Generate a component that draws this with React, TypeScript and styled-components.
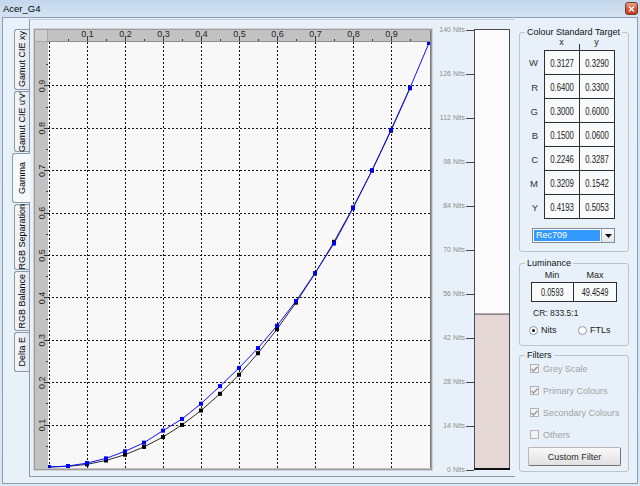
import React from "react";
import styled, { createGlobalStyle } from "styled-components";

const FONT = `"Liberation Sans", Arial, Helvetica, sans-serif`;

const GlobalStyle = createGlobalStyle`
  html, body { margin: 0; padding: 0; }
  body { background: #d9e6f3; font-family: ${FONT}; color: #1a1a1a; }
  #root { width: 640px; height: 486px; overflow: hidden; }
`;

// ---- window chrome ----

const Window = styled.div`
  width: 640px;
  height: 486px;
  display: flex;
  flex-direction: column;
  background: linear-gradient(to bottom, #c3d7ec 0px, #d5e3f2 17px, #d9e6f3 100%);
`;

const TitleBar = styled.div`
  height: 17px;
  display: flex;
  align-items: center;
  justify-content: space-between;
  padding: 0 2px 0 3px;
  box-sizing: border-box;
`;

const Title = styled.span`
  font-size: 9.5px;
  color: #000;
`;

const CloseButton = styled.div`
  width: 13px;
  height: 13px;
  box-sizing: border-box;
  border: 1px solid #7b3326;
  border-radius: 3px;
  background: linear-gradient(to bottom, #eaa58f, #d65a3d 50%, #c23b1f);
  display: flex;
  align-items: center;
  justify-content: center;
`;

const Client = styled.div`
  flex: 1;
  margin: 0 2px 2px 2px;
  border: 1px solid #8d9db0;
  background: #e8f1f9;
  display: flex;
`;

// ---- tabs ----

const TabArea = styled.div`
  display: flex;
  padding: 1px 0 0 9px;
`;

const TabStrip = styled.div`
  width: 17px;
  display: flex;
  flex-direction: column;
  align-items: flex-end;
  padding-top: 10px;
  box-sizing: border-box;
`;

const Tab = styled.div<{ $active?: boolean; $len: number }>`
  height: ${({ $len }) => $len}px;
  width: ${({ $active }) => ($active ? 18 : 15)}px;
  margin-right: ${({ $active }) => ($active ? -1 : 0)}px;
  margin-bottom: 1px;
  box-sizing: border-box;
  border: 1px solid #8a99a8;
  border-right: none;
  border-radius: 3px 0 0 3px;
  background: ${({ $active }) =>
    $active ? "#f6f9fc" : "linear-gradient(to right, #f4f7fa, #e1e8ef)"};
  display: flex;
  align-items: center;
  justify-content: center;
  padding-left: 1px;
  position: relative;
  z-index: ${({ $active }) => ($active ? 1 : 0)};
`;

const TabLabel = styled.span`
  display: inline-block;
  writing-mode: vertical-rl;
  transform: rotate(180deg);
  font-size: 9px;
  line-height: 1;
  white-space: nowrap;
  color: #000;
`;

const Panel = styled.div`
  width: 486px;
  height: 458px;
  box-sizing: border-box;
  border-left: 1px solid #8a99a8;
  border-bottom: 1px solid #8a99a8;
  border-top: 1px solid #c3cfda;
  background: #e8f1f9;
  display: flex;
  align-items: flex-start;
  padding: 4px 0 0 3px;
`;

const ChartSvg = styled.svg`
  display: block;
  flex: none;
`;

// ---- right column ----

const RightPanel = styled.div`
  display: flex;
  flex-direction: column;
  padding: 9px 0 0 4px;
`;

const Group = styled.fieldset<{ $h: number; $mt?: number }>`
  margin: ${({ $mt }) => $mt ?? 0}px 0 0 0;
  padding: 0;
  width: 110px;
  min-width: 0;
  height: ${({ $h }) => $h}px;
  box-sizing: border-box;
  border: 1px solid #b9c4ce;
  border-radius: 3px;
`;

const Legend = styled.legend`
  margin-left: 5px;
  padding: 0 2px;
  font-size: 9px;
  line-height: 10px;
  color: #111;
`;

const HeadRow = styled.div`
  display: flex;
  margin-left: 24px;
  height: 13px;
  font-size: 9px;
  line-height: 11px;
  color: #222;
`;

const HeadCell = styled.div<{ $split?: boolean }>`
  width: 35px;
  text-align: center;
  position: relative;
  &::before {
    content: "";
    display: ${({ $split }) => ($split ? "block" : "none")};
    position: absolute;
    left: 0;
    bottom: 0;
    width: 1px;
    height: 6px;
    background: #2e2e2e;
  }
`;

const Row = styled.div`
  display: flex;
`;

const RowLabel = styled.div`
  width: 24px;
  box-sizing: border-box;
  padding-right: 6px;
  font-size: 9.5px;
  color: #333;
  display: flex;
  align-items: center;
  justify-content: flex-end;
`;

const Cell = styled.div<{ $first?: boolean; $last?: boolean }>`
  width: ${({ $last }) => ($last ? 36 : 35)}px;
  height: ${({ $first }) => ($first ? 25 : 24)}px;
  box-sizing: border-box;
  border-left: 1px solid #2e2e2e;
  border-bottom: 1px solid #2e2e2e;
  border-top: ${({ $first }) => ($first ? "1px solid #2e2e2e" : "none")};
  border-right: ${({ $last }) => ($last ? "1px solid #2e2e2e" : "none")};
  background: #f9fafb;
  display: flex;
  align-items: center;
  justify-content: center;
  color: #222;
`;

// the dialog's numeric font is a tall condensed face
const Num = styled.span<{ $size?: number }>`
  display: inline-block;
  font-size: ${({ $size }) => $size ?? 10.5}px;
  transform: scaleX(0.74);
  white-space: nowrap;
`;

const Select = styled.div`
  margin: 9px 0 0 12px;
  width: 83px;
  height: 15px;
  box-sizing: border-box;
  border: 1px solid #7f8a95;
  background: #fff;
  display: flex;
  padding: 1px 0 1px 1px;
`;

const SelectValue = styled.div`
  flex: 1;
  background: #3399ff;
  color: #fff;
  font-size: 9px;
  line-height: 11px;
  padding-left: 2px;
`;

const SelectArrow = styled.div`
  width: 13px;
  margin: -1px 0 -1px 1px;
  box-sizing: border-box;
  border-left: 1px solid #a9b2bb;
  background: linear-gradient(to bottom, #fbfbfb, #e3e6e9);
  display: flex;
  align-items: center;
  justify-content: center;
`;

const LumHead = styled.div`
  margin: 2px 0 0 11px;
  width: 86px;
  display: flex;
  font-size: 9px;
  line-height: 10px;
  color: #222;
  & > span:first-child { width: 42px; text-align: center; }
  & > span:last-child { flex: 1; text-align: center; }
`;

const LumBox = styled.div`
  margin: 2px 0 0 11px;
  width: 86px;
  height: 20px;
  box-sizing: border-box;
  border: 1px solid #2e2e2e;
  background: #f9fafb;
  display: flex;
`;

const LumCell = styled.div<{ $divider?: boolean }>`
  width: ${({ $divider }) => ($divider ? "auto" : "41px")};
  flex: ${({ $divider }) => ($divider ? 1 : "none")};
  border-left: ${({ $divider }) => ($divider ? "1px solid #2e2e2e" : "none")};
  display: flex;
  align-items: center;
  justify-content: center;
  color: #222;
`;

const Ratio = styled.div`
  margin: 6px 0 0 13px;
  font-size: 8.5px;
  line-height: 10px;
  color: #222;
`;

const RadioRow = styled.div`
  margin: 7px 0 0 9px;
  display: flex;
  height: 10px;
`;

const RadioOption = styled.label`
  width: 49px;
  display: flex;
  align-items: center;
  gap: 3px;
  font-size: 9px;
  color: #222;
`;

const RadioDot = styled.span<{ $checked?: boolean }>`
  width: 9px;
  height: 9px;
  box-sizing: border-box;
  border-radius: 50%;
  border: 1px solid #8c97a2;
  background: #fff;
  display: flex;
  align-items: center;
  justify-content: center;
  &::after {
    content: "";
    width: 3px;
    height: 3px;
    border-radius: 50%;
    background: ${({ $checked }) => ($checked ? "#111" : "transparent")};
  }
`;

const FilterList = styled.div`
  display: flex;
  flex-direction: column;
  gap: 11px;
  padding: 3px 0 0 10px;
`;

const CheckRow = styled.label`
  height: 11px;
  display: flex;
  align-items: center;
  gap: 4px;
  font-size: 9px;
  color: #a3a3a3;
`;

const CheckBox = styled.span`
  width: 9px;
  height: 9px;
  box-sizing: border-box;
  border: 1px solid #b2b2b2;
  background: #f3f3f3;
  display: flex;
  align-items: center;
  justify-content: center;
`;

const FilterButton = styled.button`
  margin: 7px 0 0 8px;
  width: 93px;
  height: 19px;
  padding: 0;
  box-sizing: border-box;
  border: 1px solid;
  border-color: #b8b8b8 #6f6f6f #6f6f6f #b8b8b8;
  border-radius: 2px;
  background: linear-gradient(to bottom, #f8f8f8, #e1e1e1);
  font-family: ${FONT};
  font-size: 9px;
  color: #2a2a2a;
`;

// ---- data ----

const TABS = [
  { label: "Gamut CIE xy", len: 61 },
  { label: "Gamut CIE u'v'", len: 61 },
  { label: "Gamma", len: 50, active: true },
  { label: "RGB Separation", len: 66 },
  { label: "RGB Balance", len: 60 },
  { label: "Delta E", len: 40 },
];

const TARGETS = [
  { name: "W", x: "0.3127", y: "0.3290" },
  { name: "R", x: "0.6400", y: "0.3300" },
  { name: "G", x: "0.3000", y: "0.6000" },
  { name: "B", x: "0.1500", y: "0.0600" },
  { name: "C", x: "0.2246", y: "0.3287" },
  { name: "M", x: "0.3209", y: "0.1542" },
  { name: "Y", x: "0.4193", y: "0.5053" },
];

const FILTERS = [
  { label: "Grey Scale", checked: true },
  { label: "Primary Colours", checked: true },
  { label: "Secondary Colours", checked: true },
  { label: "Others", checked: false },
];

// measured deviation from the 2.2 target, per 5% step
const LIFT = [
  0, 0.001, 0.003, 0.005, 0.008, 0.01, 0.015, 0.014, 0.016, 0.018, 0.016,
  0.012, 0.008, 0.004, 0.001, -0.004, -0.002, 0, 0.002, 0.001, 0,
];

const STEPS = Array.from({ length: 21 }, (_, i) => i * 0.05);
const TARGET = STEPS.slice(0, 20).map((v) => ({ x: v, y: Math.pow(v, 2.2) }));
const MEASURED = STEPS.map((v, i) => ({ x: v, y: Math.pow(v, 2.2) + LIFT[i] }));

// chart geometry (svg coords, before the 4px top inset)
const X0 = 16;
const XS = 380;
const Y0 = 439;
const YS = 424;
const INSET = 4;
const px = (v: number) => X0 + v * XS;
const py = (v: number) => Y0 - v * YS;
const crisp = (n: number) => Math.round(n) + 0.5;

const GammaChart = () => {
  const tenths = Array.from({ length: 9 }, (_, i) => (i + 1) / 10);
  const halves = Array.from({ length: 10 }, (_, i) => i / 10 + 0.05);
  const line = (pts: { x: number; y: number }[]) =>
    pts.map((p) => `${px(p.x).toFixed(1)},${py(p.y).toFixed(1)}`).join(" ");

  return (
    <ChartSvg width={400} height={451} viewBox="0 0 400 451">
      <defs>
        <clipPath id="plotClip">
          <rect x={15} y={14} width={382} height={426} />
        </clipPath>
      </defs>
      <g transform={`translate(0 ${INSET})`}>
        <rect x={1} y={1} width={398} height={441} fill="#c2c2c2" />
        <rect x={15} y={14} width={382} height={426} fill="#f8f8f8" />
        {/* corner box */}
        <rect x={1.5} y={1.5} width={13} height={12} fill="#cfcfcf" stroke="#a6a6a6" />
        <line x1={15} y1={1.5} x2={397} y2={1.5} stroke="#e6e6e6" />
        <line x1={1.5} y1={14} x2={1.5} y2={440} stroke="#e0e0e0" />
        <line x1={15} y1={13.5} x2={397} y2={13.5} stroke="#8e8e8e" />
        <line x1={397.5} y1={1} x2={397.5} y2={440} stroke="#7a7a7a" />

        {/* grid */}
        <g stroke="#111" strokeDasharray="2 2" shapeRendering="crispEdges">
          {[0, ...tenths].map((v) => (
            <line key={`gx${v}`} x1={crisp(px(v))} y1={14} x2={crisp(px(v))} y2={440} />
          ))}
          {tenths.map((v) => (
            <line key={`gy${v}`} x1={15} y1={crisp(py(v))} x2={397} y2={crisp(py(v))} />
          ))}
        </g>

        {/* ticks */}
        <g stroke="#3a3a3a" shapeRendering="crispEdges">
          {tenths.map((v) => (
            <line key={`tx${v}`} x1={crisp(px(v))} y1={8} x2={crisp(px(v))} y2={13} />
          ))}
          {halves.map((v) => (
            <line key={`hx${v}`} x1={crisp(px(v))} y1={11} x2={crisp(px(v))} y2={13} />
          ))}
          {tenths.map((v) => (
            <line key={`ty${v}`} x1={11} y1={crisp(py(v))} x2={15} y2={crisp(py(v))} />
          ))}
          {halves.map((v) => (
            <line key={`hy${v}`} x1={13} y1={crisp(py(v))} x2={15} y2={crisp(py(v))} />
          ))}
        </g>

        {/* axis labels */}
        <g fontFamily={FONT} fontSize={9} fill="#262626" textAnchor="middle">
          {tenths.map((v) => (
            <text key={`lx${v}`} x={px(v) + 0.5} y={9}>
              {v.toFixed(1)}
            </text>
          ))}
          {tenths.map((v) => (
            <text key={`ly${v}`} transform={`translate(12 ${py(v) + 0.5}) rotate(-90)`}>
              {v.toFixed(1)}
            </text>
          ))}
        </g>

        {/* curves */}
        <g clipPath="url(#plotClip)">
          <polyline points={line(TARGET)} fill="none" stroke="#2a2a2a" strokeWidth={1} />
          {TARGET.map((p) => (
            <rect key={`t${p.x}`} x={px(p.x) - 2} y={py(p.y) - 2} width={4} height={4} fill="#000" />
          ))}
          <polyline points={line(MEASURED)} fill="none" stroke="#1010ff" strokeWidth={1} />
          {MEASURED.map((p) => (
            <rect key={`m${p.x}`} x={px(p.x) - 2} y={py(p.y) - 2} width={4} height={4} fill="#0000f0" />
          ))}
        </g>

        {/* frame */}
        <rect x={0.5} y={0.5} width={399} height={442} fill="none" stroke="#d2d2d2" />
        <rect x={1.5} y={1.5} width={397} height={440} fill="none" stroke="#9c9c9c" />
      </g>
    </ChartSvg>
  );
};

const NitsGauge = ({ value, max }: { value: number; max: number }) => {
  const top = 1.5 + INSET;
  const bottom = 441.5 + INSET;
  const h = bottom - top;
  const fillTop = bottom - (value / max) * h;
  const marks = Array.from({ length: 11 }, (_, i) => i);

  return (
    <ChartSvg width={80} height={451} viewBox="0 0 80 451">
      <g fontFamily={FONT} fontSize={7} fill="#8e8e8e" textAnchor="end">
        {marks.map((i) => (
          <text key={i} x={32} y={top + (i * h) / 10 + 2.5}>
            {max - i * 14} Nits
          </text>
        ))}
      </g>
      <g stroke="#444" shapeRendering="crispEdges">
        {marks.map((i) => (
          <line key={i} x1={33} y1={crisp(top + (i * h) / 10)} x2={41} y2={crisp(top + (i * h) / 10)} />
        ))}
      </g>
      <rect x={41.5} y={top} width={35} height={h} fill="#fcfcfc" stroke="#4a4a4a" />
      <rect x={42} y={fillTop} width={34} height={bottom - fillTop} fill="#e6d7d7" />
      <line x1={41.5} y1={fillTop} x2={76.5} y2={fillTop} stroke="#4a4a4a" />
      <line x1={41} y1={bottom - 0.5} x2={77} y2={bottom - 0.5} stroke="#111" strokeWidth={2} />
    </ChartSvg>
  );
};

export default function App() {
  return (
    <>
      <GlobalStyle />
      <Window>
        <TitleBar>
          <Title>Acer_G4</Title>
          <CloseButton>
            <svg width="7" height="6" viewBox="0 0 7 6">
              <path d="M1 0.5 L6 5.5 M6 0.5 L1 5.5" stroke="#fff" strokeWidth="1.4" />
            </svg>
          </CloseButton>
        </TitleBar>
        <Client>
          <TabArea>
            <TabStrip>
              {TABS.map((t) => (
                <Tab key={t.label} $len={t.len} $active={t.active}>
                  <TabLabel>{t.label}</TabLabel>
                </Tab>
              ))}
            </TabStrip>
            <Panel>
              <GammaChart />
              <NitsGauge value={49.4549} max={140} />
            </Panel>
          </TabArea>

          <RightPanel>
            <Group $h={225}>
              <Legend>Colour Standard Target</Legend>
              <HeadRow>
                <HeadCell>x</HeadCell>
                <HeadCell $split>y</HeadCell>
              </HeadRow>
              {TARGETS.map((r, i) => (
                <Row key={r.name}>
                  <RowLabel>{r.name}</RowLabel>
                  <Cell $first={i === 0}>
                    <Num>{r.x}</Num>
                  </Cell>
                  <Cell $first={i === 0} $last>
                    <Num>{r.y}</Num>
                  </Cell>
                </Row>
              ))}
              <Select>
                <SelectValue>Rec709</SelectValue>
                <SelectArrow>
                  <svg width="7" height="4" viewBox="0 0 7 4">
                    <path d="M0 0 H7 L3.5 4 Z" fill="#111" />
                  </svg>
                </SelectArrow>
              </Select>
            </Group>

            <Group $h={88} $mt={6}>
              <Legend>Luminance</Legend>
              <LumHead>
                <span>Min</span>
                <span>Max</span>
              </LumHead>
              <LumBox>
                <LumCell>
                  <Num $size={10}>0.0593</Num>
                </LumCell>
                <LumCell $divider>
                  <Num $size={10}>49.4549</Num>
                </LumCell>
              </LumBox>
              <Ratio>CR: 833.5:1</Ratio>
              <RadioRow>
                <RadioOption>
                  <RadioDot $checked />
                  Nits
                </RadioOption>
                <RadioOption>
                  <RadioDot />
                  FTLs
                </RadioOption>
              </RadioRow>
            </Group>

            <Group $h={122} $mt={4}>
              <Legend>Filters</Legend>
              <FilterList>
                {FILTERS.map((f) => (
                  <CheckRow key={f.label}>
                    <CheckBox>
                      {f.checked && (
                        <svg width="7" height="6" viewBox="0 0 7 6">
                          <path d="M0.5 3 L2.5 5 L6.5 0.8" fill="none" stroke="#9b9b9b" strokeWidth="1.5" />
                        </svg>
                      )}
                    </CheckBox>
                    {f.label}
                  </CheckRow>
                ))}
              </FilterList>
              <FilterButton type="button">Custom Filter</FilterButton>
            </Group>
          </RightPanel>
        </Client>
      </Window>
    </>
  );
}
